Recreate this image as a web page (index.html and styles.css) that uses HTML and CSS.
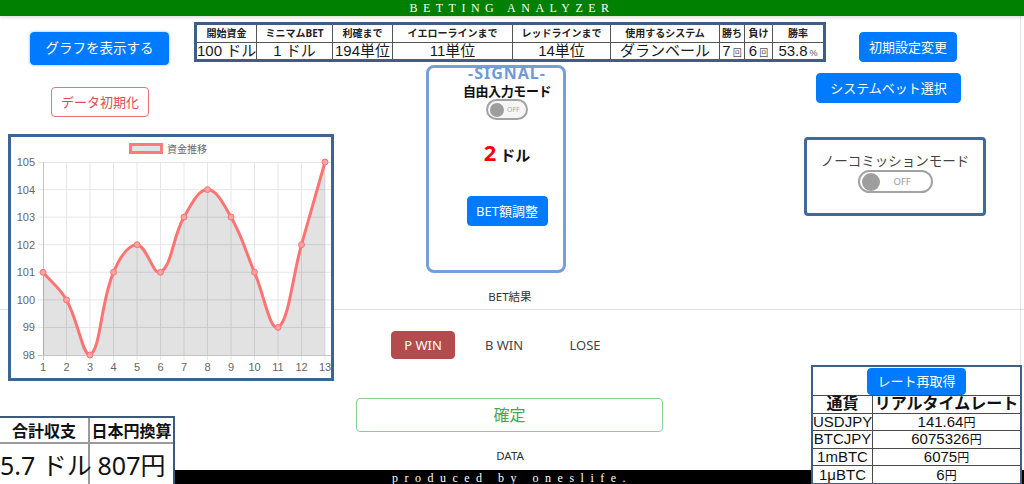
FILE: index.html
```html
<!DOCTYPE html>
<html lang="ja">
<head>
<meta charset="utf-8">
<title>BETTING ANALYZER</title>
<link rel="stylesheet" href="styles.css">
</head>
<body>
<div class="page">
  <header class="topbar">BETTING ANALYZER</header>

  <div class="toprow">
    <div class="toprow-left">
      <button class="btn btn-blue btn-graph">グラフを表示する</button>
    </div>
    <table class="settings">
      <colgroup>
        <col class="col-start"><col class="col-min"><col class="col-take"><col class="col-yellow"><col class="col-red"><col class="col-system"><col class="col-win"><col class="col-lose"><col class="col-rate">
      </colgroup>
      <tr>
        <th>開始資金</th><th>ミニマムBET</th><th>利確まで</th><th>イエローラインまで</th><th>レッドラインまで</th><th>使用するシステム</th><th>勝ち</th><th>負け</th><th>勝率</th>
      </tr>
      <tr>
        <td>100 ドル</td><td>1 ドル</td><td>194単位</td><td>11単位</td><td>14単位</td><td>ダランベール</td><td>7<span class="unit">回</span></td><td>6<span class="unit">回</span></td><td>53.8<span class="unit">%</span></td>
      </tr>
    </table>
    <button class="btn btn-blue btn-init">初期設定変更</button>
  </div>

  <section class="col-left">
    <button class="btn btn-outline-red btn-reset">データ初期化</button>
    <div class="chart">
      <svg viewBox="0 0 320 241" width="320" height="241">
        <path class="grid" d="M55.5 25V223M79 25V223M102.5 25V223M126 25V223M149.5 25V223M173 25V223M196.5 25V223M220 25V223M243.5 25V223M267 25V223M290.5 25V223M314 25V223M27 25.5H320M27 52.6H320M27 80.1H320M27 107.7H320M27 135.3H320M27 162.9H320M27 190.4H320"/>
        <path class="axis" d="M32.5 25V223M27 218.5H320"/>
        <path class="area" d="M32,135.3 C41.4,146.3 48.4,150.4 55.5,162.9 C67.2,183.5 71.3,218 79,218 C90.1,211.5 89.3,166.3 102.5,135.3 C108.1,122.2 116.6,107.7 126,107.7 C135.4,107.7 142.4,139.5 149.5,135.3 C161.2,128.4 161.25,100.8 173,80.1 C180.05,67.7 187.1,52.6 196.5,52.6 C205.9,52.6 212.95,67.7 220,80.1 C231.75,100.8 234.1,113.2 243.5,135.3 C252.9,157.4 259.3,194.9 267,190.4 C278.1,183.9 281.1,140.8 290.5,107.7 C299.9,74.6 304.6,58.1 314,25 L314,218 L32,218 Z"/>
        <path class="line" d="M32,135.3 C41.4,146.3 48.4,150.4 55.5,162.9 C67.2,183.5 71.3,218 79,218 C90.1,211.5 89.3,166.3 102.5,135.3 C108.1,122.2 116.6,107.7 126,107.7 C135.4,107.7 142.4,139.5 149.5,135.3 C161.2,128.4 161.25,100.8 173,80.1 C180.05,67.7 187.1,52.6 196.5,52.6 C205.9,52.6 212.95,67.7 220,80.1 C231.75,100.8 234.1,113.2 243.5,135.3 C252.9,157.4 259.3,194.9 267,190.4 C278.1,183.9 281.1,140.8 290.5,107.7 C299.9,74.6 304.6,58.1 314,25"/>
        <g class="pts">
          <circle cx="32" cy="135.3" r="3"/><circle cx="55.5" cy="162.9" r="3"/><circle cx="79" cy="218" r="3"/><circle cx="102.5" cy="135.3" r="3"/><circle cx="126" cy="107.7" r="3"/><circle cx="149.5" cy="135.3" r="3"/><circle cx="173" cy="80.1" r="3"/><circle cx="196.5" cy="52.6" r="3"/><circle cx="220" cy="80.1" r="3"/><circle cx="243.5" cy="135.3" r="3"/><circle cx="267" cy="190.4" r="3"/><circle cx="290.5" cy="107.7" r="3"/><circle cx="314" cy="25" r="3"/>
        </g>
        <rect class="legend-box" x="119.5" y="7.5" width="31" height="8"/>
        <text class="legend-text" x="156" y="16">資金推移</text>
        <g class="ylabels">
          <text x="24" y="29">105</text><text x="24" y="56.6">104</text><text x="24" y="84.1">103</text><text x="24" y="111.7">102</text><text x="24" y="139.3">101</text><text x="24" y="166.9">100</text><text x="24" y="194.4">99</text><text x="24" y="222">98</text>
        </g>
        <g class="xlabels">
          <text x="32" y="234">1</text><text x="55.5" y="234">2</text><text x="79" y="234">3</text><text x="102.5" y="234">4</text><text x="126" y="234">5</text><text x="149.5" y="234">6</text><text x="173" y="234">7</text><text x="196.5" y="234">8</text><text x="220" y="234">9</text><text x="243.5" y="234">10</text><text x="267" y="234">11</text><text x="290.5" y="234">12</text><text x="314" y="234">13</text>
        </g>
      </svg>
    </div>
    <table class="totals">
      <colgroup><col class="tot-sum"><col class="tot-yen"></colgroup>
      <tr><th>合計収支</th><th>日本円換算</th></tr>
      <tr><td>5.7 ドル</td><td>807円</td></tr>
    </table>
  </section>

  <section class="col-center">
    <div class="signal">
      <div class="signal-title">-SIGNAL-</div>
      <div class="signal-mode">自由入力モード</div>
      <span class="toggle toggle-sm"><span class="knob"></span><span class="toggle-text">OFF</span></span>
      <div class="signal-amount"><span class="amount-num">2</span> ドル</div>
      <button class="btn btn-blue btn-adjust">BET額調整</button>
    </div>
    <div class="section-label bet-label">BET結果</div>
    <div class="result-btns">
      <button class="btn btn-result is-active">P WIN</button>
      <button class="btn btn-result">B WIN</button>
      <button class="btn btn-result">LOSE</button>
    </div>
    <button class="btn btn-confirm">確定</button>
    <div class="section-label data-label">DATA</div>
  </section>

  <section class="col-right">
    <button class="btn btn-blue btn-system">システムベット選択</button>
    <div class="nocomm">
      <div class="nocomm-title">ノーコミッションモード</div>
      <span class="toggle toggle-lg"><span class="knob"></span><span class="toggle-text">OFF</span></span>
    </div>
    <table class="rates">
      <colgroup><col class="rate-cur"><col class="rate-val"></colgroup>
      <tr><td colspan="2" class="refresh-cell"><button class="btn btn-blue btn-refresh">レート再取得</button></td></tr>
      <tr class="rates-head"><th>通貨</th><th>リアルタイムレート</th></tr>
      <tr><td>USDJPY</td><td>141.64<span class="yen">円</span></td></tr>
      <tr><td>BTCJPY</td><td>6075326<span class="yen">円</span></td></tr>
      <tr><td>1mBTC</td><td>6075<span class="yen">円</span></td></tr>
      <tr><td>1μBTC</td><td>6<span class="yen">円</span></td></tr>
    </table>
  </section>

  <footer class="footer">produced by oneslife.</footer>
</div>
</body>
</html>
```

FILE: styles.css
```css
* { box-sizing: border-box; }

html, body {
  margin: 0;
  padding: 0;
  background: #fff;
}

body {
  width: 1024px;
  height: 484px;
  overflow: hidden;
  font-family: "Noto Sans", "Noto Sans CJK JP", sans-serif;
  color: #222;
}

.page {
  width: 1024px;
  height: 484px;
  overflow: hidden;
  display: grid;
  grid-template-columns: 340px 340px 344px;
  grid-template-rows: 16px 49px 405px 14px;
  background:
    linear-gradient(#dedede, #dedede) 0 309px / 100% 1px no-repeat,
    linear-gradient(#e6e6e6, #e6e6e6) 1020px 16px / 1px 454px no-repeat,
    #fff;
}

/* ---------- top bar ---------- */
.topbar {
  grid-column: 1 / -1;
  grid-row: 1;
  background: #008000;
  color: #fff;
  font-family: "Liberation Serif", serif;
  font-size: 12px;
  letter-spacing: 5.5px;
  line-height: 16px;
  text-align: center;
  white-space: nowrap;
  box-shadow: 0 2px 3px rgba(0, 0, 0, 0.12);
  position: relative;
  z-index: 2;
}

/* ---------- buttons ---------- */
.btn {
  display: block;
  flex: none;
  font-family: inherit;
  border: 1px solid transparent;
  border-radius: 4px;
  padding: 0;
  line-height: 1;
  cursor: pointer;
  white-space: nowrap;
  background: transparent;
}

.btn-blue {
  background: #007bff;
  border-color: #007bff;
  color: #fff;
}

.btn-graph {
  margin: 16px 0 0 30px;
  width: 139px;
  height: 33px;
  font-size: 13.5px;
  box-shadow: 0 0 3px rgba(0, 123, 255, 0.55);
}

.btn-init {
  margin: 16px 0 0 33px;
  width: 98px;
  height: 30px;
  font-size: 13px;
}

.btn-outline-red {
  border-color: #e8737e;
  color: #de4c5a;
  background: #fff;
}

.btn-reset {
  margin: 22px 0 0 51px;
  width: 98px;
  height: 30px;
  font-size: 13px;
}

.btn-system {
  margin: 8px 0 0 136px;
  width: 145px;
  height: 30px;
  font-size: 13px;
}

/* ---------- top row ---------- */
.toprow {
  grid-column: 1 / -1;
  grid-row: 2;
  display: flex;
  align-items: flex-start;
}

.toprow-left {
  width: 194px;
  flex: none;
}

.settings {
  flex: none;
  margin-top: 6px;
  width: 632px;
  border: 3px solid #3f5e86;
  border-collapse: separate;
  border-spacing: 0;
  table-layout: fixed;
  background: #fff;
}

.col-start { width: 59px; }
.col-min { width: 76px; }
.col-take { width: 60px; }
.col-yellow { width: 120px; }
.col-red { width: 98px; }
.col-system { width: 109px; }
.col-win { width: 25px; }
.col-lose { width: 28px; }
.col-rate { width: 51px; }

.settings th,
.settings td {
  padding: 0;
  text-align: center;
  white-space: nowrap;
  border-left: 1px solid #555;
}

.settings th:first-child,
.settings td:first-child {
  border-left: 0;
}

.settings th {
  height: 17px;
  font-size: 10px;
  font-weight: bold;
  color: #222;
  line-height: 17px;
}

.settings td {
  height: 17px;
  border-top: 1px solid #555;
  font-family: "Liberation Sans", "Noto Sans CJK JP", sans-serif;
  font-size: 15px;
  line-height: 16px;
  color: #1a1a1a;
}

.settings .unit {
  font-size: 9px;
  line-height: 1;
  color: #555;
  margin-left: 2px;
}

/* ---------- columns ---------- */
.col-left,
.col-center,
.col-right {
  display: flex;
  flex-direction: column;
  align-items: flex-start;
  min-height: 0;
}

.col-left > *,
.col-center > *,
.col-right > * {
  flex: none;
}

.col-left {
  grid-column: 1;
  grid-row: 3 / 5;
  z-index: 1;
}

.col-center {
  grid-column: 2;
  grid-row: 3;
}

.col-right {
  grid-column: 3;
  grid-row: 3 / 5;
  z-index: 1;
}

/* ---------- chart ---------- */
.chart {
  margin: 17px 0 0 8px;
  width: 326px;
  height: 247px;
  border: 3px solid #3b6594;
  background: #fff;
}

.chart svg {
  display: block;
}

.chart .grid {
  stroke: #e6e6e6;
  stroke-width: 1;
  fill: none;
}

.chart .axis {
  stroke: #c4c4c4;
  stroke-width: 1;
  fill: none;
}

.chart .area {
  fill: rgba(0, 0, 0, 0.115);
  stroke: none;
}

.chart .line {
  fill: none;
  stroke: #ff7373;
  stroke-width: 3;
  stroke-linejoin: round;
}

.chart .pts circle {
  fill: #f5a3a3;
  stroke: #ff7373;
  stroke-width: 1;
}

.chart .legend-box {
  fill: #e4e4e4;
  stroke: #ff7a7a;
  stroke-width: 3;
}

.chart text {
  font-family: "Liberation Sans", "Noto Sans CJK JP", sans-serif;
  font-size: 11px;
  fill: #666;
}

.chart .legend-text {
  font-size: 10px;
}

.chart .ylabels text {
  text-anchor: end;
}

.chart .xlabels text {
  text-anchor: middle;
}

/* ---------- totals ---------- */
.totals {
  margin: 35px 0 0 -2px;
  width: 177px;
  border: 2px solid #3d5a7c;
  border-collapse: separate;
  border-spacing: 0;
  table-layout: fixed;
  background: #fff;
}

.tot-sum { width: 90px; }
.tot-yen { width: 83px; }

.totals th,
.totals td {
  padding: 0;
  text-align: center;
  white-space: nowrap;
  color: #111;
}

.totals th:first-child,
.totals td:first-child {
  border-right: 2px solid #9a9a9a;
}

.totals th {
  height: 25px;
  font-size: 16px;
  font-weight: bold;
  border-bottom: 2px solid #9a9a9a;
}

.totals td {
  height: 42px;
  font-size: 25px;
  line-height: 30px;
}

/* ---------- signal ---------- */
.signal {
  margin-left: 86px;
  width: 140px;
  height: 208px;
  border: 3px solid #74a0d6;
  border-radius: 8px;
  display: flex;
  flex-direction: column;
  align-items: center;
  padding-left: 22px;
}

.signal-title {
  margin-top: -2px;
  font-size: 16px;
  font-weight: bold;
  letter-spacing: 1px;
  line-height: 14px;
  color: #6f9ad6;
  white-space: nowrap;
}

.signal-mode {
  margin-top: 3px;
  font-size: 13px;
  font-weight: bold;
  letter-spacing: -0.4px;
  line-height: 16px;
  color: #111;
  white-space: nowrap;
}

.toggle {
  display: flex;
  align-items: center;
  border: 2px solid #a3a3a3;
  border-radius: 999px;
  background: #f6f6f6;
  flex: none;
}

.toggle .knob {
  border-radius: 50%;
  background: #9e9e9e;
  flex: none;
}

.toggle .toggle-text {
  color: #a8a8a8;
  line-height: 1;
}

.toggle-sm {
  width: 42px;
  height: 21px;
  padding: 0 2px;
  gap: 3px;
}

.toggle-sm .knob {
  width: 14px;
  height: 14px;
}

.toggle-sm .toggle-text {
  font-size: 7px;
}

.signal-amount {
  margin-top: 20px;
  font-size: 15px;
  font-weight: bold;
  line-height: 24px;
  color: #111;
  white-space: nowrap;
}

.amount-num {
  font-size: 22px;
  color: #f00;
}

.btn-adjust {
  margin-top: 29px;
  width: 81px;
  height: 30px;
  font-size: 13px;
}

/* ---------- bet result ---------- */
.section-label {
  align-self: stretch;
  text-align: center;
  font-size: 11.5px;
  line-height: 14px;
  color: #333;
}

.bet-label {
  margin-top: 17px;
}

.result-btns {
  display: flex;
  gap: 17px;
  margin: 27px 0 0 51px;
}

.btn-result {
  width: 64px;
  height: 28px;
  font-size: 13px;
  color: #444;
}

.btn-result.is-active {
  background: #b44b4c;
  border-color: #b44b4c;
  color: #fff;
}

.btn-confirm {
  margin: 39px 0 0 16px;
  width: 307px;
  height: 34px;
  border: 1.5px solid #86d294;
  background: #fff;
  color: #3fab59;
  font-size: 16px;
}

.data-label {
  margin-top: 17px;
}

/* ---------- no commission ---------- */
.nocomm {
  margin: 34px 0 0 124px;
  width: 182px;
  height: 79px;
  border: 3px solid #41699a;
  border-radius: 4px;
  display: flex;
  flex-direction: column;
  align-items: center;
}

.nocomm-title {
  margin-top: 12px;
  font-size: 13.5px;
  line-height: 18px;
  color: #444;
  white-space: nowrap;
}

.toggle-lg {
  width: 75px;
  height: 23px;
  padding: 0 2px;
  background: #fff;
}

.toggle-lg .knob {
  width: 18px;
  height: 18px;
}

.toggle-lg .toggle-text {
  font-size: 9.5px;
  margin-left: 14px;
  color: #999;
}

/* ---------- rates ---------- */
.rates {
  margin: 149px 0 0 131px;
  width: 211px;
  border: 2px solid #3f5f82;
  border-collapse: separate;
  border-spacing: 0;
  table-layout: fixed;
  background: #fff;
}

.rate-cur { width: 60px; }
.rate-val { width: 147px; }

.rates th,
.rates td {
  padding: 0;
  text-align: center;
  white-space: nowrap;
  color: #111;
  height: 17.6px;
  font-family: "Liberation Sans", "Noto Sans CJK JP", sans-serif;
  font-size: 15px;
  line-height: 16px;
}

.rates tr + tr th,
.rates tr + tr td {
  border-top: 1px solid #4a4a4a;
}

.rates tr + tr th:first-child,
.rates tr + tr td:first-child {
  border-right: 1px solid #4a4a4a;
}

.rates .refresh-cell {
  height: 28px;
  vertical-align: top;
}

.btn-refresh {
  margin: 1px auto 0;
  width: 99px;
  height: 27px;
  font-family: "Noto Sans", "Noto Sans CJK JP", sans-serif;
  font-size: 13px;
  line-height: 1;
}

.rates-head th {
  font-weight: bold;
  font-size: 16px;
}

.rates .yen {
  font-size: 12px;
  line-height: 1;
}

/* ---------- footer ---------- */
.footer {
  grid-column: 1 / -1;
  grid-row: 4;
  background: #000;
  color: #fff;
  font-family: "Liberation Serif", serif;
  font-size: 12px;
  letter-spacing: 6.5px;
  line-height: 17px;
  text-align: center;
  white-space: nowrap;
  overflow: hidden;
}
```
